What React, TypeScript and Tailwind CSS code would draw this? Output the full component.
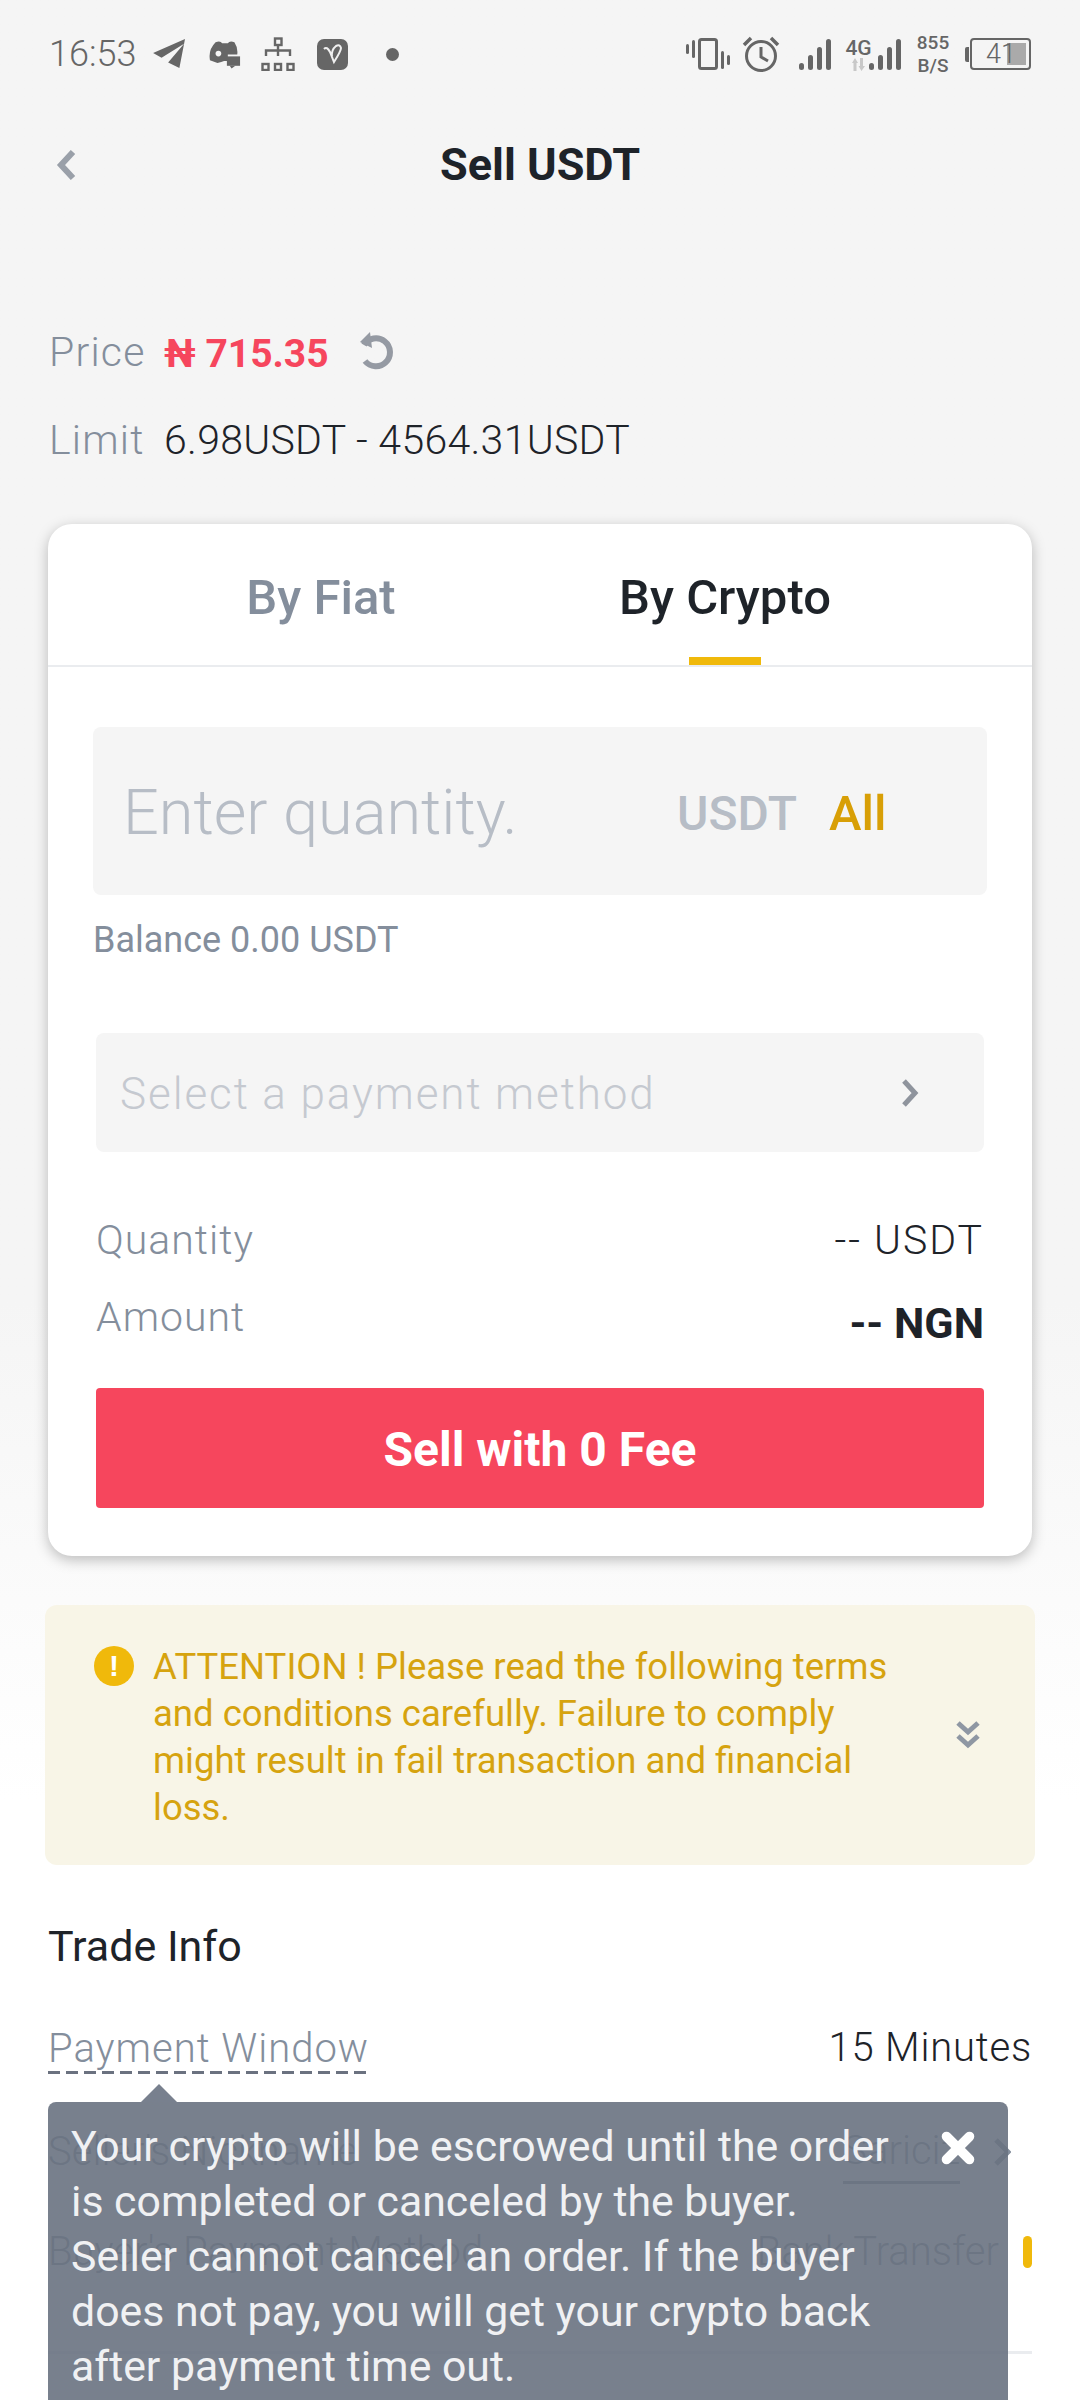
import { X } from 'lucide-react'

function StatusLeft() {
  return (
    <div className="flex items-center text-[#666666]">
      <span className="text-[36px] leading-none font-[Roboto] font-light w-[92px]">16:53</span>
      <svg width="34" height="30" viewBox="0 0 36 32" className="ml-[12px]" fill="#666666">
        <path d="M0 15 L34 0 L28 31 L16 25 L33 5 L9 20 Z" />
      </svg>
      <svg width="32" height="29" viewBox="0 0 34 30" className="ml-[22px]" fill="#666666">
        <path d="M7 2 Q12 0 14 3 H20 Q22 0 27 2 Q31 8 30 15 H20 V22 H16 L13 23 L9 24 L1 21 Q-1 10 7 2 Z" />
        <circle cx="10" cy="14" r="3" fill="#f5f5f5" />
        <rect x="19" y="17" width="14" height="10" fill="#666666" />
        <path d="M22 27 h6 l-4 3 z" />
      </svg>
      <svg width="34" height="34" viewBox="0 0 34 34" className="ml-[20px]" fill="none" stroke="#666666" strokeWidth="2.4">
        <rect x="14" y="1.5" width="6.5" height="6.5" />
        <path d="M17 8 V19 M5 19 V13.5 H29 V19" />
        <rect x="1.5" y="27" width="6" height="6" />
        <rect x="14" y="27" width="6" height="6" />
        <rect x="26.5" y="27" width="6" height="6" />
      </svg>
      <div className="ml-[22px] w-[31px] h-[31px] rounded-[7px] bg-[#666666] flex items-center justify-center">
        <svg width="22" height="22" viewBox="0 0 22 22" fill="none" stroke="#f0f0f0" strokeWidth="2">
          <path d="M2 6 Q5 3 8 9 L12 19 Q19 8 19 5 Q18 1 14 3 Q9 7 10 14" />
        </svg>
      </div>
      <div className="ml-[38px] w-[13px] h-[13px] rounded-full bg-[#666666]" />
    </div>
  )
}

function Signal({ className }: { className: string }) {
  return (
    <svg width="32" height="33" viewBox="0 0 32 33" className={className} fill="#666666">
      <rect x="0" y="25" width="5" height="7" rx="2.5" />
      <rect x="9" y="17" width="5" height="15" rx="2.5" />
      <rect x="18" y="9" width="5" height="23" rx="2.5" />
      <rect x="27" y="1" width="5" height="31" rx="2.5" />
    </svg>
  )
}

function StatusRight() {
  return (
    <div className="flex items-center">
      <svg width="44" height="34" viewBox="0 0 44 34" fill="#666666">
        <rect x="0" y="7" width="3" height="10" rx="1.5" />
        <rect x="6" y="3" width="3" height="18" rx="1.5" />
        <rect x="13.5" y="2.5" width="17" height="29" rx="2" fill="none" stroke="#666666" strokeWidth="3" />
        <rect x="35" y="14" width="3" height="18" rx="1.5" />
        <rect x="41" y="18" width="3" height="10" rx="1.5" />
      </svg>
      <svg width="38" height="38" viewBox="0 0 38 38" className="ml-[12px]" fill="none" stroke="#666666" strokeWidth="3">
        <circle cx="19" cy="21" r="14.5" />
        <path d="M19 12 V22 L26 26" />
        <path d="M2 10 L9 3 M36 10 L29 3" strokeWidth="3.5" />
      </svg>
      <Signal className="ml-[19px]" />
      <div className="ml-[15px] flex flex-col items-center w-[25px]">
        <span className="text-[21px] leading-[20px] font-medium font-[Roboto] text-[#666666]">4G</span>
        <svg width="16" height="13" viewBox="0 0 16 13" fill="#c8c8c8">
          <path d="M4 0 L7 5 H5.5 V13 H2.5 V5 H1 Z M9 0 H12 V8 H14 L10.5 13 L7.5 8 H9 Z" />
        </svg>
      </div>
      <Signal className="-ml-[2px]" />
      <div className="ml-[16px] w-[32px] flex flex-col items-center text-[19px] leading-[23px] font-medium font-[Roboto] text-[#666666]">
        <span>855</span>
        <span>B/S</span>
      </div>
      <div className="ml-[16px] flex items-center">
        <div className="w-[4px] h-[15px] bg-[#666666] rounded-l-[2px]" />
        <div className="ml-[1px] relative w-[61px] h-[32px] rounded-[4px] border-[2px] border-[#666666] flex items-center overflow-hidden">
          <div className="absolute right-[3px] top-[3px] bottom-[3px] w-[19px] bg-[#aaaaaa]" />
          <span className="relative ml-[14px] text-[27px] leading-none font-light font-[Roboto] text-[#666666]">41</span>
        </div>
      </div>
    </div>
  )
}

export default function App() {
  return (
    <main className="relative w-[1080px] h-[2400px] overflow-hidden bg-gradient-to-b from-[#f5f5f5] from-[1300px] to-white to-[1800px] font-['Liberation_Sans',sans-serif]">
      {/* status bar */}
      <div className="h-[108px] pl-[49px] pr-[49px] flex items-center justify-between">
        <StatusLeft />
        <StatusRight />
      </div>

      {/* header */}
      <div className="relative mt-[25px] h-[64px] flex items-center justify-center">
        <svg width="20" height="30" viewBox="0 0 20 30" className="absolute left-[56px] top-[17px]" fill="none" stroke="#9aa0a9" strokeWidth="6">
          <path d="M17 2 L5 15 L17 28" />
        </svg>
        <h1 className="text-[45px] font-[Roboto] font-bold text-[#1e2329]">Sell USDT</h1>
      </div>

      {/* price */}
      <div className="mt-[134px] pl-[49px] h-[44px] flex items-center font-[Roboto] text-[41px] font-light tracking-[1.2px]">
        <span className="text-[#848e9c] w-[115px]">Price</span>
        <span className="pt-[2px] text-[#f6465d] font-bold text-[39px] tracking-[0px]">₦ 715.35</span>
        <svg width="36" height="40" viewBox="0 0 36 40" className="ml-[28px] -mt-[4px]" fill="none" stroke="#959aa3" strokeWidth="6">
          <path d="M7 14 A14 14 0 1 1 8 30" />
          <path d="M13 1 L3 11 L15 17 Z" fill="#959aa3" stroke="none" />
        </svg>
      </div>
      <div className="mt-[44px] pl-[49px] h-[44px] flex items-center font-[Roboto] text-[41px] font-light tracking-[1.2px]">
        <span className="text-[#848e9c] w-[115px]">Limit</span>
        <span className="text-[#1e2329] tracking-[0.3px]">6.98USDT - 4564.31USDT</span>
      </div>

      {/* card */}
      <section className="mt-[61px] mx-[48px] h-[1032px] bg-white rounded-[24px] shadow-[0_4px_14px_rgba(0,0,0,0.25)]">
        <div className="h-[143px] pl-[71px] border-b-[2px] border-[#eaecef] flex text-[49px] font-[Roboto] font-medium">
          <div className="w-[404px] flex justify-center pt-[44px]">
            <span className="leading-[60px] text-[#848e9c]">By Fiat</span>
          </div>
          <div className="relative w-[404px] flex justify-center pt-[44px]">
            <span className="leading-[60px] text-[#1e2329]">By Crypto</span>
            <div className="absolute left-[166px] bottom-0 w-[72px] h-[8px] bg-[#f0b90b]" />
          </div>
        </div>

        <div className="mt-[60px] mx-[45px] h-[168px] rounded-[8px] bg-[#f5f5f5] flex items-center pl-[30px] pt-[5px]">
          <span className="w-[554px] text-[63px] font-[Roboto] font-light text-[#b7bdc6]">Enter quantity.</span>
          <span className="text-[48px] font-[Roboto] font-medium text-[#b7bdc6]">USDT</span>
          <span className="ml-[32px] text-[49px] font-[Roboto] font-medium text-[#d89f06]">All</span>
        </div>
        <p className="mt-[25px] ml-[45px] text-[36px] leading-[40px] font-[Roboto] text-[#848e9c]">Balance 0.00 USDT</p>

        <div className="mt-[73px] mx-[48px] h-[119px] rounded-[8px] bg-[#f5f5f5] flex items-center justify-between pl-[24px] pr-[64px]">
          <span className="pt-[3px] text-[44px] font-[Roboto] font-light tracking-[1.9px] text-[#c5c9d0]">Select a payment method</span>
          <svg width="20" height="28" viewBox="0 0 20 28" fill="none" stroke="#8f949d" strokeWidth="5">
            <path d="M4 2 L15 14 L4 26" />
          </svg>
        </div>

        <div className="mt-[66px] mx-[48px] flex justify-between items-center h-[46px] text-[41px] font-[Roboto] font-light tracking-[1px]">
          <span className="text-[#848e9c]">Quantity</span>
          <span className="text-[#1e2329] tracking-[2px]">-- USDT</span>
        </div>
        <div className="mt-[31px] mx-[48px] flex justify-between items-center h-[46px] text-[41px] font-[Roboto] font-light tracking-[1px]">
          <span className="text-[#848e9c]">Amount</span>
          <span className="pt-[10px] text-[43px] text-[#1e2329] font-bold tracking-normal">-- NGN</span>
        </div>

        <button className="mt-[47px] ml-[48px] w-[888px] h-[120px] pt-[3px] rounded-[4px] bg-[#f6465d] text-white text-[48px] font-[Roboto] font-bold">
          Sell with 0 Fee
        </button>
      </section>

      {/* attention */}
      <div className="mt-[49px] mx-[45px] h-[260px] rounded-[12px] bg-[#f8f5e7] flex pl-[49px] pr-[55px] pt-[38px]">
        <div className="mt-[3px] w-[40px] h-[40px] shrink-0 rounded-full bg-[#f0b90b] flex items-center justify-center">
          <span className="text-[30px] leading-none font-bold text-white">!</span>
        </div>
        <p className="ml-[19px] w-[745px] text-[36.5px] leading-[47px] font-[Roboto] text-[#d6a30f]">
          ATTENTION ! Please read the following terms and conditions carefully. Failure to comply might result in fail transaction and financial loss.
        </p>
        <svg width="24" height="28" viewBox="0 0 24 28" className="ml-auto mt-[78px]" fill="none" stroke="#8f97a3" strokeWidth="5">
          <path d="M2 2 L12 11 L22 2 M2 15 L12 24 L22 15" />
        </svg>
      </div>

      {/* trade info */}
      <h2 className="mt-[57px] ml-[48px] text-[43px] leading-[48px] font-[Roboto] text-[#1e2329]">Trade Info</h2>
      <div className="mt-[54px] mx-[48px] flex justify-between items-center h-[48px] text-[40px] font-[Roboto] font-light tracking-[1px]">
        <div className="pt-[2px]">
          <span className="block text-[#848e9c] leading-[48px]">Payment Window</span>
          <div className="-mt-[2px] h-[3px] bg-[repeating-linear-gradient(90deg,#6b7280_0,#6b7280_12px,transparent_12px,transparent_18px)]" />
        </div>
        <span className="text-[#1e2329] tracking-[0.8px]">15 Minutes</span>
      </div>
      <div className="mt-[56px] mx-[48px] flex justify-between items-center h-[48px] pr-[21px] text-[40px] font-[Roboto] font-light text-[#848e9c]">
        <span>Seller's Nickname</span>
        <span className="flex items-center">
          <span className="border-b-[3px] border-[#848e9c]">Sariciz</span>
          <svg width="18" height="28" viewBox="0 0 18 28" className="ml-[33px]" fill="none" stroke="#848e9c" strokeWidth="5">
            <path d="M3 2 L15 14 L3 26" />
          </svg>
        </span>
      </div>
      <div className="mt-[52px] mx-[48px] flex justify-between items-center h-[48px] text-[40px] font-[Roboto] font-light text-[#848e9c]">
        <span>Buyer's Payment Method</span>
        <span className="flex items-center">
          Bank Transfer
          <span className="ml-[24px] w-[9px] h-[32px] rounded-full bg-[#f0b90b]" />
        </span>
      </div>
      <div className="mt-[75px] mx-[48px] h-[3px] bg-[#eaecef]" />

      {/* tooltip */}
      <div className="absolute left-[48px] top-[2102px] w-[960px] h-[298px] rounded-t-[8px] bg-[#697281]/90 pt-[17px] pl-[23px]">
        <div className="absolute left-[93px] -top-[18px] w-0 h-0 border-x-[18px] border-x-transparent border-b-[18px] border-b-[#78808e]" />
        <p className="w-[830px] text-[42.8px] leading-[55px] font-[Roboto] text-[#f0f1f3]">
          Your crypto will be escrowed until the order is completed or canceled by the buyer.
          <br />
          Seller cannot cancel an order. If the buyer does not pay, you will get your crypto back after payment time out.
        </p>
        <X size={46} strokeWidth={5} color="#ffffff" className="absolute left-[887px] top-[23px]" />
      </div>
    </main>
  )
}
